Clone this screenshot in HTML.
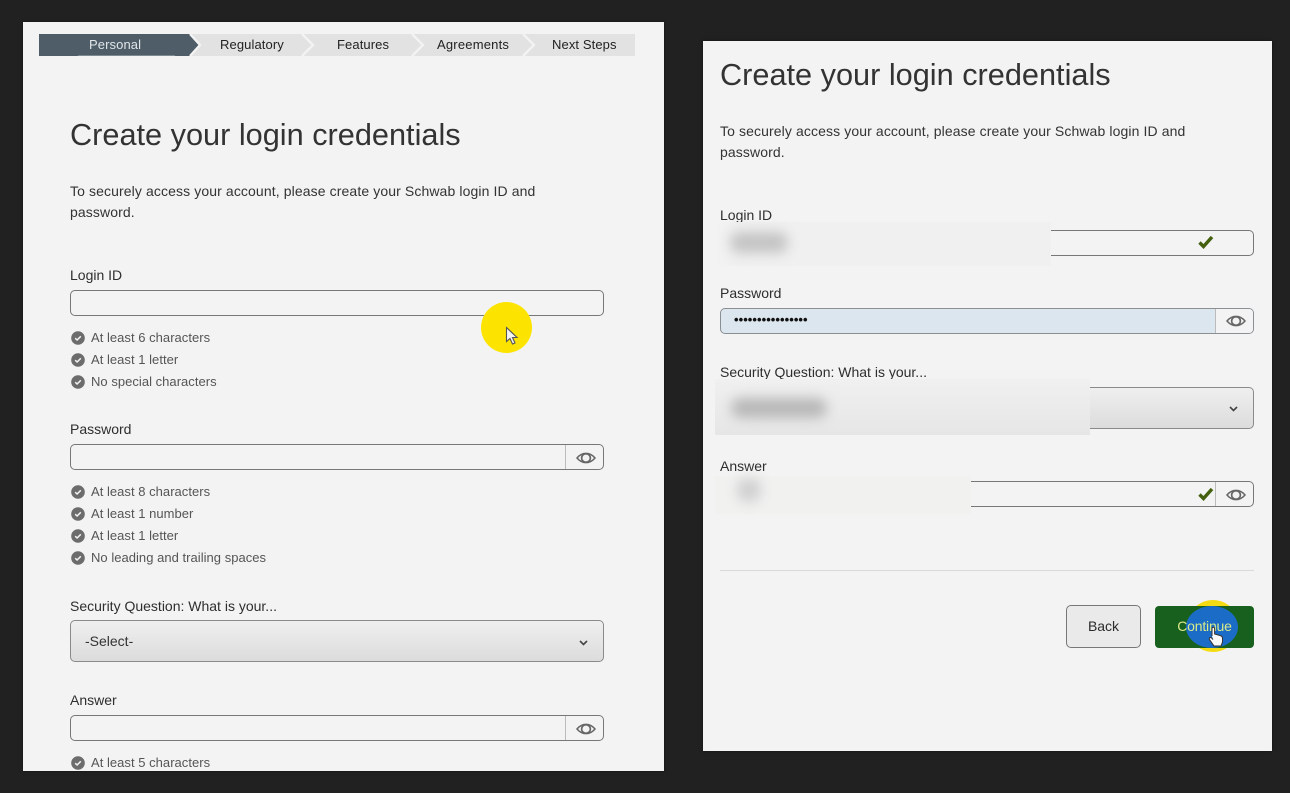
<!DOCTYPE html>
<html><head><meta charset="utf-8">
<style>
html,body{margin:0;padding:0;width:1290px;height:793px;overflow:hidden;background:#212121;font-family:"Liberation Sans",Arial,sans-serif}
div,span{position:absolute;white-space:nowrap;box-sizing:border-box}
.panel{background:#f3f3f3;box-shadow:0 0 3px rgba(0,0,0,.5)}
.h{font-size:30.7px;line-height:38px;color:#333}
.p{font-size:14px;line-height:20px;color:#333;letter-spacing:.11px}
.l{font-size:14px;line-height:18px;color:#2e2e2e}
.r{font-size:13px;line-height:16px;color:#555;letter-spacing:.03px}
.box{border:1px solid #777;border-radius:5px;height:26px;background:#f3f3f3}
.div{width:1px;background:#bbb;height:24px}
.s{font-size:13px;line-height:16px;color:#222;top:37px;letter-spacing:.1px}
</style></head><body>

<div class="panel" style="left:23px;top:22px;width:641px;height:749px"></div>
<div class="panel" style="left:703px;top:41px;width:569px;height:710px"></div>

<svg style="position:absolute;left:39px;top:34px" width="596" height="22" viewBox="0 0 596 22">
<rect width="596" height="22" fill="#e1e2e1"/>
<path d="M0 0H151L161 11L151 22H0Z" fill="#4e5d67"/>
<path d="M151 0L161 11L151 22M263 0L274 11L263 22M373 0L384 11L373 22M484 0L495 11L484 22" fill="none" stroke="#f3f3f3" stroke-width="2.4"/>
<rect x="39" y="21" width="97" height="1" fill="#7d8a92"/>
</svg>
<div class="s" style="left:89px;color:#dfe5e8">Personal</div>
<div class="s" style="left:220px">Regulatory</div>
<div class="s" style="left:337px">Features</div>
<div class="s" style="left:437px;letter-spacing:.2px">Agreements</div>
<div class="s" style="left:552px">Next Steps</div>

<div class="h" style="left:70px;top:116px">Create your login credentials</div>
<div class="p" style="left:70px;top:181px">To securely access your account, please create your Schwab login ID and</div>
<div class="p" style="left:70px;top:202px">password.</div>

<div class="l" style="left:70px;top:266px">Login ID</div>
<div class="box" style="left:70px;top:290px;width:534px"></div>

<svg width="0" height="0" style="position:absolute"><defs>
<g id="c"><circle cx="7" cy="7" r="6.8" fill="#6c6c6c"/><path d="M4.2 7.2L6.1 9L9.8 5.3" fill="none" stroke="#f3f3f3" stroke-width="1.5"/></g>
<g id="e"><path d="M1 6C4 2.4 7 1.4 10 1.4S16 2.4 19 6C16 9.6 13 10.6 10 10.6S4 9.6 1 6Z" fill="none" stroke="#666" stroke-width="1.5"/><ellipse cx="10" cy="6" rx="4.4" ry="4.2" fill="none" stroke="#666" stroke-width="1.7"/></g>
<g id="k"><path d="M1.5 7.5L5.5 11.5L14 2" fill="none" stroke="#44600f" stroke-width="3.4"/></g>
<g id="d"><path d="M1 1L4.5 4.5L8 1" fill="none" stroke="#444" stroke-width="1.6"/></g>
</defs></svg>

<svg style="position:absolute;left:71px;top:331px" width="14" height="14"><use href="#c"/></svg><div class="r" style="left:91px;top:330px">At least 6 characters</div>
<svg style="position:absolute;left:71px;top:353px" width="14" height="14"><use href="#c"/></svg><div class="r" style="left:91px;top:352px">At least 1 letter</div>
<svg style="position:absolute;left:71px;top:375px" width="14" height="14"><use href="#c"/></svg><div class="r" style="left:91px;top:374px">No special characters</div>

<div class="l" style="left:70px;top:420px">Password</div>
<div class="box" style="left:70px;top:444px;width:534px"></div>
<div class="div" style="left:565px;top:445px"></div>
<svg style="position:absolute;left:576px;top:452px" width="20" height="12"><use href="#e"/></svg>

<svg style="position:absolute;left:71px;top:485px" width="14" height="14"><use href="#c"/></svg><div class="r" style="left:91px;top:484px">At least 8 characters</div>
<svg style="position:absolute;left:71px;top:507px" width="14" height="14"><use href="#c"/></svg><div class="r" style="left:91px;top:506px">At least 1 number</div>
<svg style="position:absolute;left:71px;top:529px" width="14" height="14"><use href="#c"/></svg><div class="r" style="left:91px;top:528px">At least 1 letter</div>
<svg style="position:absolute;left:71px;top:551px" width="14" height="14"><use href="#c"/></svg><div class="r" style="left:91px;top:550px">No leading and trailing spaces</div>

<div class="l" style="left:70px;top:597px">Security Question: What is your...</div>
<div class="box" style="left:70px;top:620px;width:534px;height:42px;border-color:#8a8a8a;background:linear-gradient(#efefef,#dcdcdc)"></div>
<div class="l" style="left:85px;top:632px;color:#333">-Select-</div>
<svg style="position:absolute;left:579px;top:640px" width="9" height="6"><use href="#d"/></svg>

<div class="l" style="left:70px;top:691px">Answer</div>
<div class="box" style="left:70px;top:715px;width:534px"></div>
<div class="div" style="left:565px;top:716px"></div>
<svg style="position:absolute;left:576px;top:723px" width="20" height="12"><use href="#e"/></svg>
<svg style="position:absolute;left:71px;top:756px" width="14" height="14"><use href="#c"/></svg><div class="r" style="left:91px;top:755px">At least 5 characters</div>

<div style="left:481px;top:302px;width:51px;height:51px;border-radius:50%;background:#fde400"></div>
<svg style="position:absolute;left:505px;top:326px" width="14" height="20" viewBox="0 0 14 20"><path d="M1.5 1.5V15.5L5 12.5L7.5 18L10 17L7.5 11.5H12Z" fill="#f5f5f5" stroke="#555" stroke-width="1.1"/></svg>

<div class="h" style="left:720px;top:56px">Create your login credentials</div>
<div class="p" style="left:720px;top:121px">To securely access your account, please create your Schwab login ID and</div>
<div class="p" style="left:720px;top:142px">password.</div>

<div class="l" style="left:720px;top:206px">Login ID</div>
<div class="box" style="left:720px;top:230px;width:534px"></div>
<div style="left:715px;top:222px;width:336px;height:44px;background:linear-gradient(90deg,#f3f3f3,#f0f0f0 6%)"></div>
<div style="left:730px;top:232px;width:58px;height:21px;background:#c4c4c4;border-radius:10px;filter:blur(6px)"></div>
<svg style="position:absolute;left:1198px;top:235px" width="16" height="14"><use href="#k"/></svg>

<div class="l" style="left:720px;top:284px">Password</div>
<div class="box" style="left:720px;top:308px;width:534px;background:#dbe6ee;border-color:#8a8f92"></div>
<div style="left:1215px;top:309px;width:38px;height:24px;background:#f3f3f3;border-radius:0 4px 4px 0;border-left:1px solid #bbb"></div>
<div style="left:734px;top:312px;font-size:13px;line-height:16px;color:#111;letter-spacing:.05px;font-weight:bold">••••••••••••••••</div>
<svg style="position:absolute;left:1226px;top:315px" width="20" height="12"><use href="#e"/></svg>

<div class="l" style="left:720px;top:363px">Security Question: What is your...</div>
<div class="box" style="left:720px;top:387px;width:534px;height:42px;border-color:#8a8a8a;background:linear-gradient(#efefef,#dcdcdc)"></div>
<div style="left:715px;top:379px;width:375px;height:56px;background:linear-gradient(#f0f0f0,#e6e6e6)"></div>
<div style="left:731px;top:398px;width:96px;height:20px;background:#b8b8b8;border-radius:10px;filter:blur(6px)"></div>
<svg style="position:absolute;left:1229px;top:406px" width="9" height="6"><use href="#d"/></svg>

<div class="l" style="left:720px;top:457px">Answer</div>
<div class="box" style="left:720px;top:481px;width:534px"></div>
<div class="div" style="left:1215px;top:482px"></div>
<div style="left:715px;top:476px;width:256px;height:38px;background:#f1f2f0"></div>
<div style="left:737px;top:478px;width:24px;height:24px;background:#d0d0d0;border-radius:10px;filter:blur(6px)"></div>
<svg style="position:absolute;left:1198px;top:487px" width="16" height="14"><use href="#k"/></svg>
<svg style="position:absolute;left:1226px;top:489px" width="20" height="12"><use href="#e"/></svg>

<div style="left:720px;top:570px;width:534px;height:1px;background:#dadada"></div>

<div style="left:1066px;top:605px;width:75px;height:43px;border:1px solid #777;border-radius:5px;background:#e9eae9"></div>
<div style="left:1066px;top:617px;width:75px;text-align:center;font-size:14px;line-height:18px;color:#2b2b2b">Back</div>

<div style="left:1187px;top:600px;width:52px;height:52px;border-radius:50%;background:#f5dc12"></div>
<div style="left:1155px;top:606px;width:99px;height:42px;border-radius:4px;background:#17601d"></div>
<div style="left:1186px;top:606px;width:52px;height:42px;background:#1b6cc6;border-radius:50%"></div>
<div style="left:1155px;top:617px;width:99px;text-align:center;font-size:14px;line-height:18px;color:#d8ea8a;letter-spacing:-.2px">Continue</div>
<svg style="position:absolute;left:1208px;top:626px" width="16" height="21" viewBox="0 0 16 21"><path d="M4 10V2.5C4 .8 6.6 .8 6.6 2.5V8L12 9.5C14 10 14.5 11 14.5 12.5V16L13 20H6L1.5 13.5C.8 12 2.4 10.8 3.6 12L5 13.5" fill="#fafafa" stroke="#333" stroke-width="1"/></svg>

</body></html>
